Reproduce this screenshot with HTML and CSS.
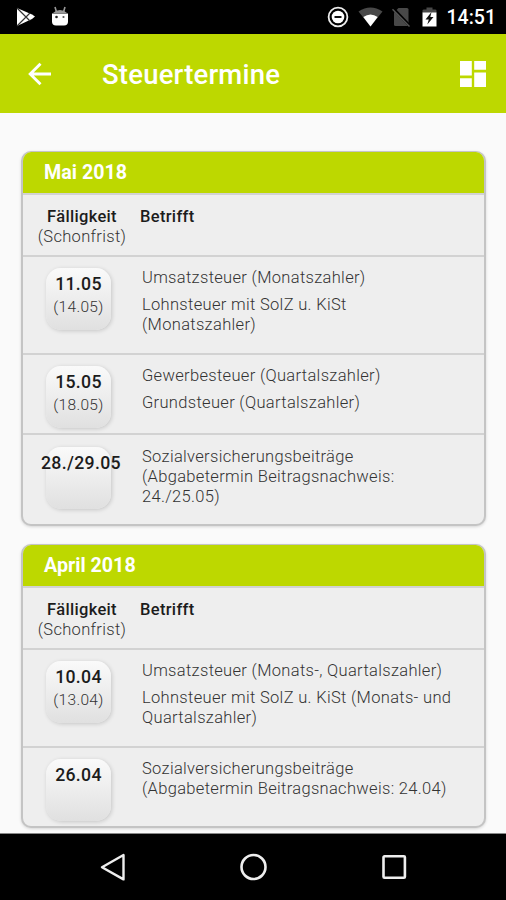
FILE: index.html
```html
<!DOCTYPE html>
<html lang="de">
<head>
    <meta charset="UTF-8">
    <meta name="viewport" content="width=device-width, initial-scale=1.0">
    <title>Steuertermine</title>
    <link rel="stylesheet" href="styles.css">
</head>
<body>
    <div class="status-bar">
        <svg class="icon-play" width="20" height="20" viewBox="0 0 20 20">
            <path d="M1 1v18l15-7 3-2.500-3-2z" fill="#fff"/>
            <path d="M1 1l13 13M1 19L14 6" stroke="#333" stroke-width="1.200" fill="none"/>
        </svg>
        <svg class="icon-android" width="18" height="20" viewBox="0 0 18 20">
            <path d="M4 1l1.500 5M14 1l-1.500 5" stroke="#999" stroke-width="1.600"/>
            <path d="M2 7q3-3 7-3t7 3z" fill="#999"/>
            <path d="M1 7.500h16v8q0 4-4 4H5q-4 0-4-4z" fill="#fff"/>
            <circle cx="5.500" cy="11" r="1.300" fill="#222"/>
            <circle cx="12.500" cy="11" r="1.100" fill="#555"/>
        </svg>
        <div class="status-right">
            <svg class="icon-dnd" width="22" height="22" viewBox="0 0 22 22">
                <circle cx="11" cy="11" r="9.400" fill="none" stroke="#eee" stroke-width="1.800"/>
                <circle cx="11" cy="11" r="6.300" fill="#fff"/>
                <path d="M7.500 11h7" stroke="#111" stroke-width="2"/>
            </svg>
            <svg class="icon-wifi" width="25" height="20" viewBox="0 0 25 20">
                <path d="M0.500 4.500Q12.500-3.500 24.500 4.500L12.500 19.500z" fill="#484848"/>
                <path d="M5.300 10q7.200-5 14.400 0l-7.200 9.500z" fill="#fff"/>
            </svg>
            <svg class="icon-sim" width="19" height="20" viewBox="0 0 19 20">
                <path d="M2 5.500L6.500 1H15q1.500 0 1.500 1.500V19h-13Q2 19 2 17.500z" fill="#484848"/>
                <path d="M1.500 1.800L18 19" stroke="#000" stroke-width="3"/>
                <path d="M0.500 2.300L17.500 19.500" stroke="#555" stroke-width="1.400"/>
            </svg>
            <svg class="icon-battery" width="15" height="20" viewBox="0 0 15 20">
                <path d="M0.500 6V3.500Q0.500 2.500 2 2.500h2.500V.500h6v2H13q1.500 0 1.500 1V6z" fill="#484848"/>
                <path d="M0.500 5.500h14v14H0.500z" fill="#fff"/>
                <path d="M9.500 5L3.500 12.500h3.300l-1.500 5 6.200-7.500H8.300z" fill="#111"/>
            </svg>
            <span class="clock">14:51</span>
        </div>
    </div>
    <header class="app-bar">
        <svg class="back" width="24" height="24" viewBox="0 0 24 24">
            <path d="M23 12H2.500M12.500 1.700L2.200 12l10.300 10.300" fill="none" stroke="#fff" stroke-width="2.900"/>
        </svg>
        <h1>Steuertermine</h1>
        <svg class="dashboard" width="26" height="26" viewBox="0 0 26 26">
            <path d="M0 0h11.800v14.600H0zM14.200 0H26v8.800H14.200zM0 17.200h11.800V26H0zM14.200 11.400H26V26H14.200z" fill="#fff"/>
        </svg>
    </header>
    <main>
        <section class="card">
            <h2>Mai 2018</h2>
            <div class="row table-head">
                <div class="due"><b>Fälligkeit</b><br>(Schonfrist)</div>
                <b>Betrifft</b>
            </div>
            <div class="row">
                <div class="date"><b>11.05</b><span>(14.05)</span></div>
                <div class="taxes">
                    <p>Umsatzsteuer (Monatszahler)</p>
                    <p>Lohnsteuer mit SolZ u. KiSt<br>(Monatszahler)</p>
                </div>
            </div>
            <div class="row">
                <div class="date"><b>15.05</b><span>(18.05)</span></div>
                <div class="taxes">
                    <p>Gewerbesteuer (Quartalszahler)</p>
                    <p>Grundsteuer (Quartalszahler)</p>
                </div>
            </div>
            <div class="row row-social">
                <div class="date date-range"><b>28./29.05</b></div>
                <div class="taxes">
                    <p>Sozialversicherungsbeiträge<br>(Abgabetermin Beitragsnachweis:<br>24./25.05)</p>
                </div>
            </div>
        </section>
        <section class="card">
            <h2>April 2018</h2>
            <div class="row table-head">
                <div class="due"><b>Fälligkeit</b><br>(Schonfrist)</div>
                <b>Betrifft</b>
            </div>
            <div class="row">
                <div class="date"><b>10.04</b><span>(13.04)</span></div>
                <div class="taxes">
                    <p>Umsatzsteuer (Monats-, Quartalszahler)</p>
                    <p>Lohnsteuer mit SolZ u. KiSt (Monats- und<br>Quartalszahler)</p>
                </div>
            </div>
            <div class="row">
                <div class="date"><b>26.04</b></div>
                <div class="taxes">
                    <p>Sozialversicherungsbeiträge<br>(Abgabetermin Beitragsnachweis: 24.04)</p>
                </div>
            </div>
        </section>
    </main>
    <nav class="nav-bar">
        <svg width="28" height="28" viewBox="0 0 28 28">
            <path d="M25.500 2v24.400L4 14.200z" fill="none" stroke="#eee" stroke-width="2.400" stroke-linejoin="round"/>
        </svg>
        <svg width="28" height="28" viewBox="0 0 28 28">
            <circle cx="14.500" cy="14" r="12" fill="none" stroke="#eee" stroke-width="2.600"/>
        </svg>
        <svg width="28" height="28" viewBox="0 0 28 28">
            <rect x="3.500" y="3.300" width="21.400" height="21.400" rx="1" fill="none" stroke="#eee" stroke-width="2.600"/>
        </svg>
    </nav>
</body>
</html>
```
FILE: styles.css
```css
* {
    padding: 0;
    margin: 0;
    box-sizing: border-box;
}

body {
    display: flex;
    flex-direction: column;
    height: 900px;
    overflow: hidden;
    background: #fafafa;
    color: #333;
    font-family: Roboto, "Liberation Sans", sans-serif;
    font-size: 16.5px;
    font-weight: 300;
    letter-spacing: 0.32px;
    line-height: 20px;
}

svg {
    display: block;
    flex: none;
}

b {
    font-weight: 500;
    color: #1c1c1c;
}

.status-bar {
    display: flex;
    align-items: center;
    height: 34px;
    padding: 0 10px 0 16px;
    background: #000;
}

.icon-android {
    margin: 0 0 3px 15px;
}

.status-right {
    display: flex;
    align-items: center;
    margin-left: auto;
}

.icon-wifi {
    margin-left: 9px;
}

.icon-sim {
    margin-left: 9px;
}

.icon-battery {
    margin-left: 11px;
}

.clock {
    margin: 2px 0 0 10px;
    color: #fff;
    font-size: 19.5px;
    font-weight: 500;
    letter-spacing: 0;
}

.app-bar {
    display: flex;
    align-items: center;
    height: 79px;
    padding: 0 20px 0 28px;
    background: #bdd800;
}

.app-bar h1 {
    margin: 3px 0 0 50px;
    color: #fff;
    font-size: 27.5px;
    font-weight: 500;
    letter-spacing: 0.2px;
    line-height: 32px;
}

.app-bar .dashboard {
    margin-left: auto;
}

main {
    flex: 1;
    padding: 38px 20px 0 21px;
    overflow: hidden;
}

.card {
    margin-bottom: 18px;
    border: 1px solid #c4c4c4;
    border-width: 1px 2px 2px;
    border-radius: 10px;
    background: #eee;
    box-shadow: 0 1px 3px rgba(0, 0, 0, 0.15);
    overflow: hidden;
}

.card h2 {
    height: 41px;
    padding: 0 21px;
    background: #bdd800;
    color: #fff;
    font-size: 19.7px;
    font-weight: 700;
    letter-spacing: 0;
    line-height: 41px;
}

.row {
    display: grid;
    grid-template-columns: 65px 1fr;
    column-gap: 31px;
    padding: 11px 0 5px 23px;
    border-top: 2px solid #d2d2d2;
}

.table-head {
    grid-template-columns: 90px 1fr;
    column-gap: 13px;
    height: 62px;
    padding: 12px 13px 0 14px;
}

.due {
    text-align: center;
}

.date {
    display: flex;
    flex-direction: column;
    align-items: center;
    height: 62px;
    padding-top: 6px;
    border-radius: 15px;
    background: linear-gradient(#fafafa, #e0e0e0);
    box-shadow: 1px 1px 4px rgba(0, 0, 0, 0.17);
}

.date b {
    font-size: 17.7px;
}

.date span {
    margin-top: 3px;
    font-size: 15.5px;
}

/* the range is wider than its badge and runs over both edges */
.date-range {
    align-items: flex-start;
}

.date-range b {
    margin-left: -5px;
    white-space: nowrap;
}

.taxes {
    padding-bottom: 13px;
}

.taxes p + p {
    margin-top: 7px;
}

.row-social {
    padding-top: 12px;
    padding-bottom: 4px;
}

.nav-bar {
    display: flex;
    justify-content: center;
    align-items: center;
    gap: 113px;
    height: 67px;
    border-top: 1px solid #888;
    background: #000;
}
```
